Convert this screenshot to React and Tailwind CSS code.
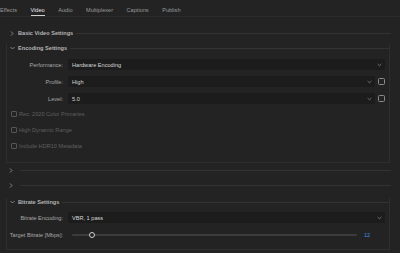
function Chevron({ open }) {
  return open ? (
    <svg width="5" height="4" viewBox="0 0 5 4" className="shrink-0">
      <polyline points="0.5,1 2.5,3 4.5,1" fill="none" stroke="#8f8f8f" strokeWidth="0.9" />
    </svg>
  ) : (
    <svg width="4" height="5" viewBox="0 0 4 5" className="shrink-0">
      <polyline points="1,0.5 3,2.5 1,4.5" fill="none" stroke="#8f8f8f" strokeWidth="0.9" />
    </svg>
  );
}

function SelectArrow() {
  return (
    <svg width="5" height="4" viewBox="0 0 5 4" className="shrink-0">
      <polyline points="0.6,1 2.5,2.8 4.4,1" fill="none" stroke="#7a7a7a" strokeWidth="0.9" />
    </svg>
  );
}

function Header({ title, open }) {
  return (
    <div className="flex h-[8px] items-center">
      <div className="flex w-[8px] justify-start">
        <Chevron open={open} />
      </div>
      {title && (
        <span className="mr-[3px] text-[5.6px] font-bold leading-[8px] text-[#b4b4b4]">
          {title}
        </span>
      )}
      <div className="h-px flex-1 bg-[#333333]" />
    </div>
  );
}

function Select({ value, check }) {
  return (
    <div className="flex flex-1 items-center">
      <div className="flex h-[11px] flex-1 items-center justify-between rounded-[1px] bg-[#1c1c1c] pl-[4px] pr-[3px]">
        <span className="text-[5.6px] leading-[8px] text-[#d6d6d6]">{value}</span>
        <SelectArrow />
      </div>
      {check && (
        <div className="ml-[3px] h-[7px] w-[7px] rounded-[1.5px] border border-[#8a8a8a]" />
      )}
    </div>
  );
}

function Row({ label, children, className }) {
  return (
    <div className={`flex h-[11px] items-center pr-[4px] ${className}`}>
      <div className="w-[56px] text-right text-[5.6px] leading-[8px] text-[#a9a9a9]">
        {label}
      </div>
      <div className="ml-[5px] flex flex-1 items-center">{children}</div>
    </div>
  );
}

function Check({ label, className }) {
  return (
    <div className={`flex h-[8px] items-center pl-[4px] ${className}`}>
      <div className="h-[6px] w-[6px] rounded-[1px] border border-[#555555]" />
      <span className="ml-[2px] text-[5.6px] leading-[8px] text-[#5f5f5f]">{label}</span>
    </div>
  );
}

export default function App() {
  const tabs = ["Effects", "Video", "Audio", "Multiplexer", "Captions", "Publish"];

  return (
    <div className="h-[253px] w-[400px] overflow-hidden bg-[#232323] font-['Liberation_Sans',Arial,sans-serif]">
      {/* TABS */}
      <div className="flex h-[17px] gap-[13.5px] border-b border-[#2c2c2c] pt-[6px]">
        {tabs.map((t) => (
          <div key={t} className="flex flex-col">
            <span
              className={`h-[8px] text-[5.6px] leading-[8px] ${
                t === "Video" ? "text-[#e6e6e6]" : "text-[#9a9a9a]"
              }`}
            >
              {t}
            </span>
            <div className={`mt-[1px] h-[1px] ${t === "Video" ? "bg-[#cfcfcf]" : ""}`} />
          </div>
        ))}
      </div>

      <div className="pl-[6px] pr-[9px]">
        {/* BASIC VIDEO */}
        <div className="mt-[12px] pl-[4px]">
          <Header title="Basic Video Settings" />
        </div>

        {/* ENCODING */}
        <div className="mt-[11px] mr-[1px] border-x border-b border-[#2e2e2e] pb-[12px]">
          <div className="-mt-[4px] pl-[3px]">
            <Header title="Encoding Settings" open />
          </div>
          <Row label="Performance:" className="mt-[7px]">
            <Select value="Hardware Encoding" />
          </Row>
          <Row label="Profile:" className="mt-[6px]">
            <Select value="High" check />
          </Row>
          <Row label="Level:" className="mt-[6px]">
            <Select value="5.0" check />
          </Row>
          <Check label="Rec. 2020 Color Primaries" className="mt-[6px]" />
          <Check label="High Dynamic Range" className="mt-[8px]" />
          <Check label="Include HDR10 Metadata" className="mt-[8px]" />
        </div>

        {/* COLLAPSED */}
        <div className="mt-[3px] pl-[3px]">
          <div className="flex h-[8px] items-center">
            <div className="w-[11px]">
              <Chevron />
            </div>
            <div className="h-px flex-1 bg-[#333333]" />
          </div>
          <div className="mt-[7px] flex h-[8px] items-center">
            <div className="w-[11px]">
              <Chevron />
            </div>
            <div className="h-px flex-1 bg-[#333333]" />
          </div>
        </div>

        {/* BITRATE */}
        <div className="mt-[13px] mr-[1px] border-x border-b border-[#2e2e2e] pb-[9px]">
          <div className="-mt-[4px] pl-[3px]">
            <Header title="Bitrate Settings" open />
          </div>
          <Row label="Bitrate Encoding:" className="mt-[6px]">
            <Select value="VBR, 1 pass" />
          </Row>
          <Row label="Target Bitrate [Mbps]:" className="mt-[6px]">
            <div className="relative ml-[4px] flex h-[11px] flex-1 items-center">
              <div className="h-[2px] w-full rounded-full bg-[#3c3c3c]" />
              <div className="absolute left-[17px] top-[2.5px] h-[6px] w-[6px] rounded-full border border-[#cfcfcf] bg-[#232323]" />
            </div>
            <div className="w-[28px] pl-[7px] text-[5.6px] leading-[8px] text-[#3d8fe0]">
              12
            </div>
          </Row>
        </div>
      </div>
    </div>
  );
}
